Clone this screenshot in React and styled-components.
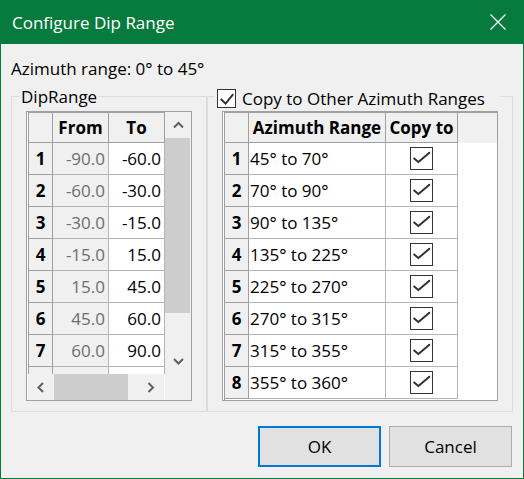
import React from 'react';
import styled, { createGlobalStyle } from 'styled-components';

const GREEN = '#077a3d';
const LINE = '#b4b4b4';
const FRAME = '#a0a0a0';
const FACE = '#f0f0f0';

const GlobalStyle = createGlobalStyle`
  html, body { margin: 0; padding: 0; background: #ffffff; }
  body { font-family: "Open Sans", "Noto Sans", sans-serif; }
  * { box-sizing: border-box; }
`;

const Window = styled.div`
  width: 524px;
  height: 479px;
  border: 1px solid ${GREEN};
  border-top: 0;
  display: flex;
  flex-direction: column;
  background: ${FACE};
  font-family: "Open Sans", "Noto Sans", sans-serif;
  font-size: 17px;
  color: #000;
`;

const TitleBar = styled.header`
  flex: none;
  height: 44px;
  background: ${GREEN};
  color: #fff;
  display: flex;
  align-items: center;
  justify-content: space-between;
  padding-left: 11px;
`;

const Title = styled.span`
  font-size: 17px;
`;

const CloseButton = styled.span`
  width: 50px;
  height: 44px;
  display: flex;
  align-items: center;
  justify-content: center;
`;

const Body = styled.main`
  flex: 1;
  display: flex;
  flex-direction: column;
  padding: 13px 10px 0;
`;

const InfoLabel = styled.div`
  line-height: 23px;
`;

const Groups = styled.div`
  display: flex;
  margin-top: 5px;
`;

const GroupBox = styled.fieldset`
  width: ${(p) => p.$width}px;
  min-width: 0;
  margin: 0;
  border: 1px solid #dcdcdc;
  padding: 3px 14px 10px;
`;

const Legend = styled.legend`
  height: 23px;
  line-height: 23px;
  padding: 0 2px;
  margin-left: ${(p) => p.$shift}px;
  width: ${(p) => (p.$width ? `${p.$width}px` : 'auto')};
  white-space: nowrap;
`;

const LegendCheck = styled.label`
  display: flex;
  align-items: center;
  gap: 6px;
  height: 23px;
  padding-top: 4px;
  line-height: 19px;
  white-space: nowrap;
`;

const CheckBox = styled.span`
  flex: none;
  display: inline-flex;
  width: ${(p) => p.$size}px;
  height: ${(p) => p.$size}px;
  border: 1px solid #333;
  background: #fff;
  svg { width: 100%; height: 100%; display: block; }
`;

const DataFrame = styled.div`
  width: 100%;
  height: 290px;
  border: 1px solid ${FRAME};
  padding-left: 1px;
  background: #fff;
  display: grid;
  grid-template-columns: ${(p) => p.$cols};
  grid-template-rows: ${(p) => p.$rows};
`;

const Table = styled.div`
  display: grid;
  grid-template-columns: ${(p) => p.$cols};
  grid-template-rows: 30px;
  grid-auto-rows: 32px;
  align-content: start;
  border-left: 1px solid ${FRAME};
  border-top: 1px solid ${FRAME};
  overflow: hidden;
  min-height: 0;
`;

const Cell = styled.div`
  display: flex;
  align-items: center;
  justify-content: ${(p) => p.$align || 'flex-start'};
  padding: 0 ${(p) => p.$pad ?? 3}px;
  border-right: 1px solid ${(p) => (p.$head ? FRAME : LINE)};
  border-bottom: 1px solid ${(p) => (p.$head ? FRAME : LINE)};
  background: ${(p) => (p.$head || p.$readonly ? FACE : '#fff')};
  color: ${(p) => (p.$readonly ? '#6d6d6d' : '#000')};
  font-weight: ${(p) => (p.$head ? 700 : 400)};
  white-space: nowrap;
  overflow: hidden;
  min-width: 0;
`;

const Filler = styled.div`
  background: ${(p) => (p.$head ? FACE : '#fff')};
`;

const VScroll = styled.div`
  background: ${FACE};
  display: flex;
  flex-direction: column;
  min-height: 0;
`;

const HScroll = styled.div`
  background: ${FACE};
  display: flex;
  border-right: 1px solid #fff;
`;

const ArrowButton = styled.div`
  flex: none;
  width: 26px;
  height: 26px;
  display: flex;
  align-items: center;
  justify-content: center;
`;

const Track = styled.div`
  flex: 1;
  display: flex;
  flex-direction: ${(p) => (p.$vertical ? 'column' : 'row')};
`;

const Thumb = styled.div`
  flex: none;
  background: #cdcdcd;
  width: ${(p) => (p.$vertical ? '25px' : `${p.$length}px`)};
  height: ${(p) => (p.$vertical ? `${p.$length}px` : '100%')};
`;

const Corner = styled.div`
  background: ${FACE};
`;

const ButtonRow = styled.div`
  display: flex;
  justify-content: flex-end;
  gap: 8px;
  margin-top: 14px;
  padding-right: 1px;
`;

const Button = styled.button`
  width: 123px;
  height: 41px;
  background: #e1e1e1;
  border: ${(p) => (p.$primary ? '2px solid #0078d7' : '1px solid #adadad')};
  font: inherit;
  color: #000;
  padding: 0;
`;

const chevrons = {
  up: '1,6.5 5.5,2 10,6.5',
  down: '1,2 5.5,6.5 10,2',
  left: '6,1 1.5,5.5 6,10',
  right: '1.5,1 6,5.5 1.5,10',
};

function Chevron({ dir }) {
  const vertical = dir === 'up' || dir === 'down';
  const w = vertical ? 11 : 8;
  const h = vertical ? 9 : 11;
  return (
    <svg width={w} height={h} viewBox={`0 0 ${w} ${h}`}>
      <polyline points={chevrons[dir]} fill="none" stroke="#606060" strokeWidth="2" />
    </svg>
  );
}

function Check({ size }) {
  const inner = size - 2;
  const pts = size > 20 ? '2.6,10 7.4,14 19,4.3' : '2.8,9 7.6,13.6 15.2,4.2';
  return (
    <CheckBox $size={size}>
      <svg viewBox={`0 0 ${inner} ${inner}`}>
        <polyline points={pts} fill="none" stroke="#2e2e2e" strokeWidth="1.9" />
      </svg>
    </CheckBox>
  );
}

const dipRows = [
  ['-90.0', '-60.0'],
  ['-60.0', '-30.0'],
  ['-30.0', '-15.0'],
  ['-15.0', '15.0'],
  ['15.0', '45.0'],
  ['45.0', '60.0'],
  ['60.0', '90.0'],
  ['', ''],
];

const azRows = [
  '45° to 70°',
  '70° to 90°',
  '90° to 135°',
  '135° to 225°',
  '225° to 270°',
  '270° to 315°',
  '315° to 355°',
  '355° to 360°',
];

function DipGrid() {
  return (
    <DataFrame $cols="137px 26px" $rows="262px 26px">
      <Table $cols="24px 56px 56px">
        <Cell $head />
        <Cell $head $align="center">From</Cell>
        <Cell $head $align="center">To</Cell>
        {dipRows.map(([from, to], i) => (
          <React.Fragment key={i}>
            <Cell $head $align="center" $pad={0}>{from ? i + 1 : ''}</Cell>
            <Cell $readonly $align="flex-end">{from}</Cell>
            <Cell $align="flex-end">{to}</Cell>
          </React.Fragment>
        ))}
      </Table>
      <VScroll>
        <ArrowButton><Chevron dir="up" /></ArrowButton>
        <Track $vertical>
          <Thumb $vertical $length={175} />
        </Track>
        <ArrowButton><Chevron dir="down" /></ArrowButton>
      </VScroll>
      <HScroll>
        <ArrowButton><Chevron dir="left" /></ArrowButton>
        <Track>
          <Thumb $length={74} />
        </Track>
        <ArrowButton><Chevron dir="right" /></ArrowButton>
      </HScroll>
      <Corner />
    </DataFrame>
  );
}

function AzimuthGrid() {
  return (
    <DataFrame $cols="1fr" $rows="1fr">
      <Table $cols="24px 137px 72px 1fr">
        <Cell $head />
        <Cell $head $align="center" $pad={0}>Azimuth Range</Cell>
        <Cell $head $align="center" $pad={0}>Copy to</Cell>
        <Filler $head />
        {azRows.map((r, i) => (
          <React.Fragment key={i}>
            <Cell $head $align="center" $pad={0}>{i + 1}</Cell>
            <Cell $pad={1}>{r}</Cell>
            <Cell $align="center"><Check size={23} /></Cell>
            <Filler />
          </React.Fragment>
        ))}
      </Table>
    </DataFrame>
  );
}

export default function App() {
  return (
    <>
      <GlobalStyle />
      <Window>
        <TitleBar>
          <Title>Configure Dip Range</Title>
          <CloseButton>
            <svg width="16" height="16" viewBox="0 0 16 16">
              <path d="M0.5 0.5 L15.5 15.5 M15.5 0.5 L0.5 15.5" stroke="#fff" strokeWidth="1.3" />
            </svg>
          </CloseButton>
        </TitleBar>
        <Body>
          <InfoLabel>Azimuth range: 0° to 45°</InfoLabel>
          <Groups>
            <GroupBox $width={196}>
              <Legend $shift={-7}>DipRange</Legend>
              <DipGrid />
            </GroupBox>
            <GroupBox $width={306}>
              <Legend $shift={-7} $width={285}>
                <LegendCheck>
                  <Check size={19} />
                  Copy to Other Azimuth Ranges
                </LegendCheck>
              </Legend>
              <AzimuthGrid />
            </GroupBox>
          </Groups>
          <ButtonRow>
            <Button $primary>OK</Button>
            <Button>Cancel</Button>
          </ButtonRow>
        </Body>
      </Window>
    </>
  );
}
